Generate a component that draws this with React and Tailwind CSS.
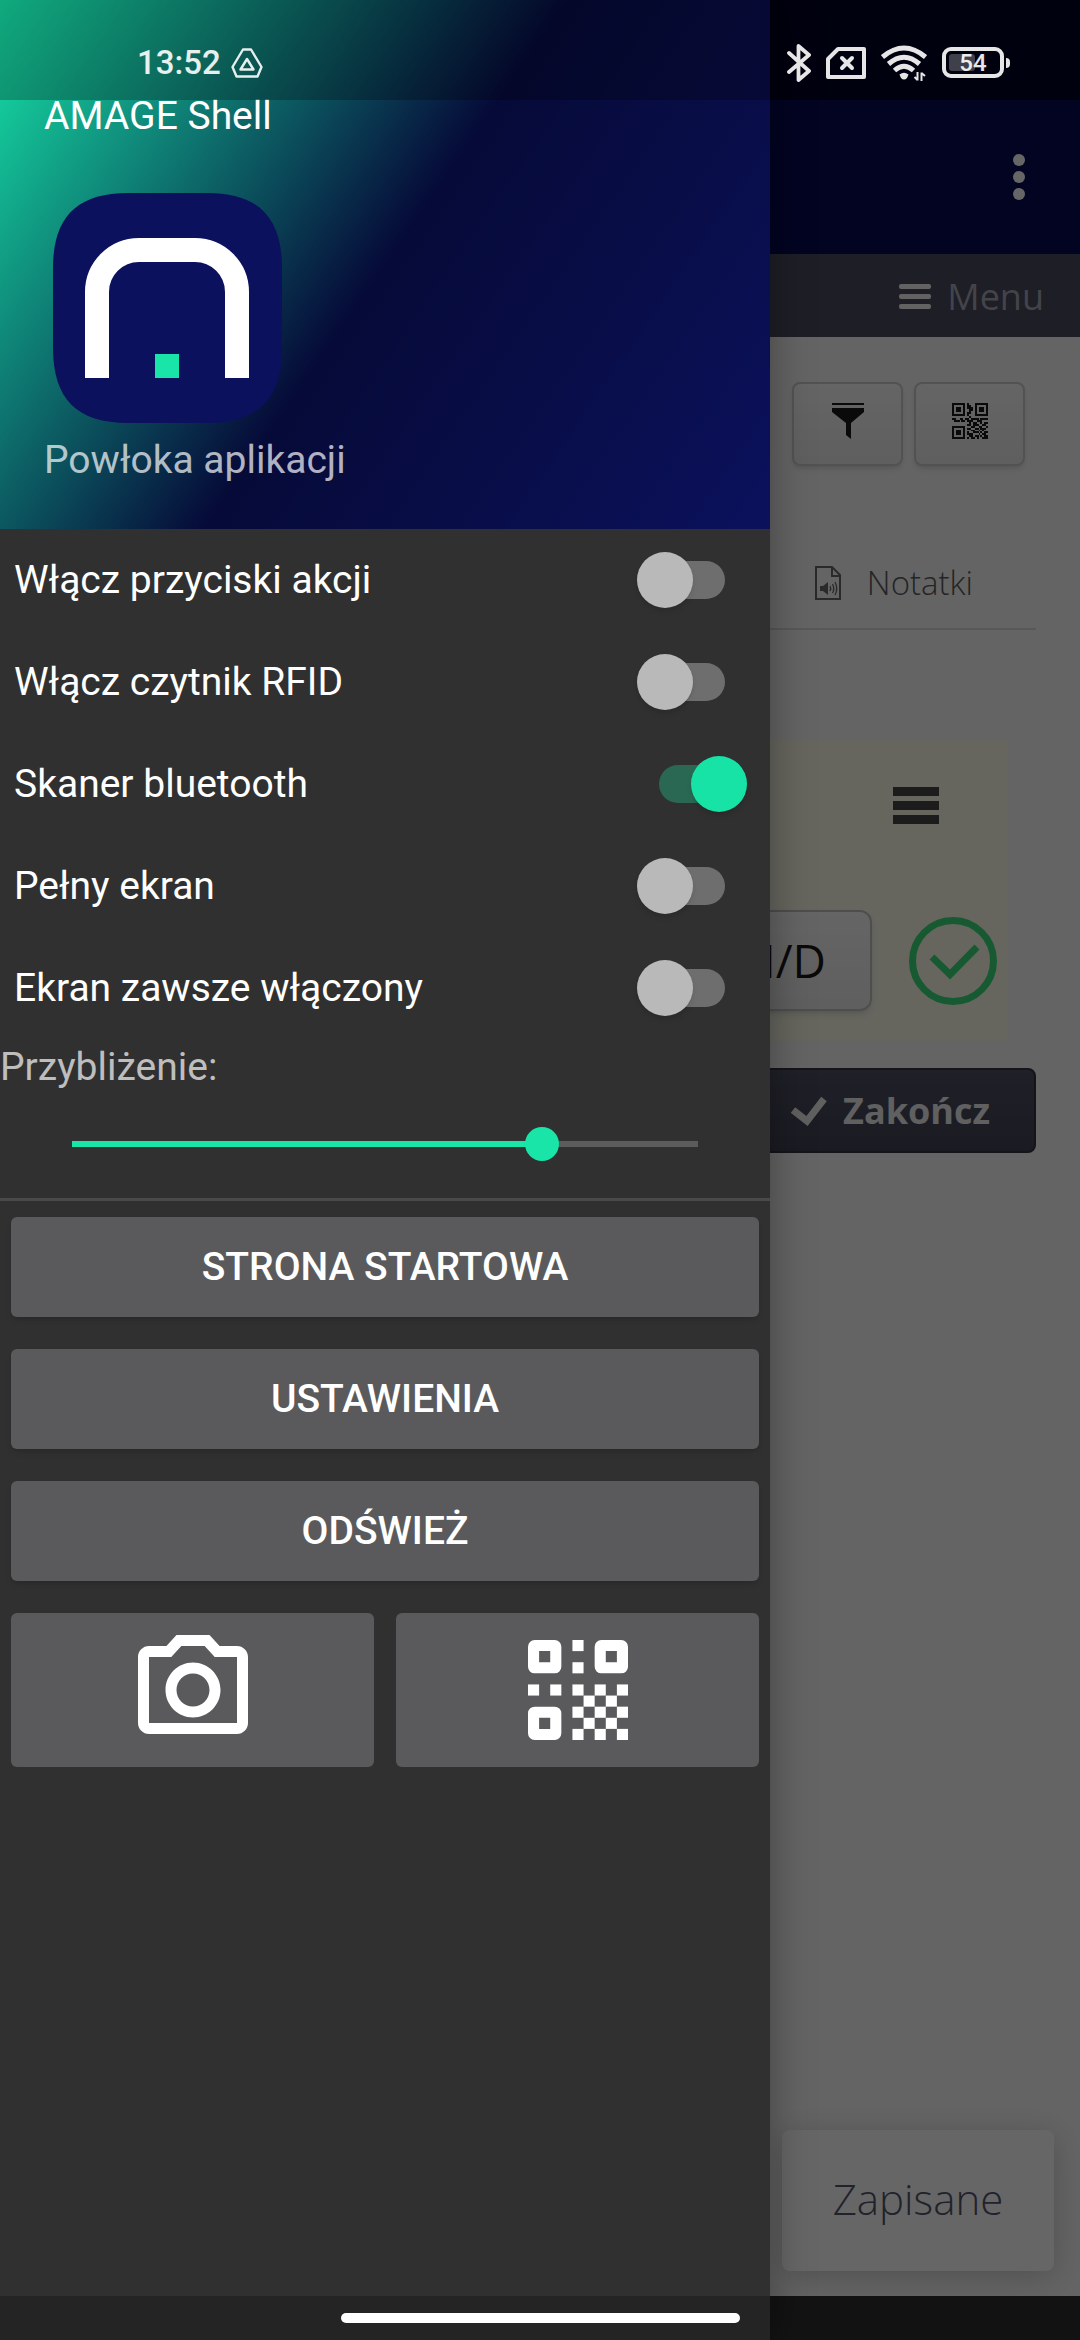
import React, { useState } from 'react';

const settings = [
  { id: 'actions', label: 'Włącz przyciski akcji', on: false },
  { id: 'rfid', label: 'Włącz czytnik RFID', on: false },
  { id: 'bluetooth', label: 'Skaner bluetooth', on: true },
  { id: 'fullscreen', label: 'Pełny ekran', on: false },
  { id: 'awake', label: 'Ekran zawsze włączony', on: false },
];

const qrCells = [
  [4, 0], [4, 2], [0, 4], [2, 4], [4, 4], [6, 4], [8, 4], [5, 5], [7, 5],
  [4, 6], [6, 6], [8, 6], [5, 7], [7, 7], [4, 8], [6, 8], [8, 8],
];

const smallQrRows = [
  '1111111010001111111',
  '1000001011001000001',
  '1011101011101011101',
  '1011101001101011101',
  '1011101001001011101',
  '1000001011001000001',
  '1111111010001111111',
  '0000000001000000000',
  '1100110110111101111',
  '0111011011100111000',
  '0000000001011001011',
  '0000000011011100110',
  '1111111000110011001',
  '1000001011001101110',
  '1011101000110010100',
  '1011101010011101011',
  '1011101011100010110',
  '1000001001101101011',
  '1111111010110100111',
];

const Logo = () => (
  <svg viewBox="0 0 229 230" className="w-[229px] h-[230px]" aria-hidden="true">
    <path
      d="M0 75C0 24 24 0 75 0H154C205 0 229 24 229 75V155C229 206 205 230 154 230H75C24 230 0 206 0 155Z"
      fill="#0b115c"
    />
    <path d="M44 185V99A42 42 0 0 1 86 57H142A42 42 0 0 1 184 99V185" fill="none" stroke="#fff" strokeWidth="24" />
    <rect x="102" y="161" width="24" height="24" fill="#18e5a7" />
  </svg>
);

const CameraIcon = () => (
  <svg viewBox="0 0 24 24" className="w-[132px] h-[132px]" fill="currentColor" aria-hidden="true">
    <path d="M14.12 4l1.83 2H20v12H4V6h4.05l1.83-2h4.24M15 2H9L7.17 4H4c-1.1 0-2 .9-2 2v12c0 1.1.9 2 2 2h16c1.1 0 2-.9 2-2V6c0-1.1-.9-2-2-2h-3.17L15 2zm-3 7c1.65 0 3 1.35 3 3s-1.35 3-3 3-3-1.35-3-3 1.35-3 3-3m0-2c-2.76 0-5 2.24-5 5s2.24 5 5 5 5-2.24 5-5-2.24-5-5-5z" />
  </svg>
);

const QrIcon = () => (
  <svg viewBox="0 0 9 9" className="w-[100px] h-[100px]" fill="currentColor" aria-hidden="true">
    {[[0, 0], [6, 0], [0, 6]].map(([x, y]) => (
      <rect key={`${x}-${y}`} x={x + 0.5} y={y + 0.5} width="2" height="2" rx="0.1" fill="none" stroke="currentColor" strokeWidth="1" strokeLinejoin="round" />
    ))}
    {qrCells.map(([x, y]) => (
      <rect key={`${x}-${y}`} x={x} y={y} width="1" height="1" />
    ))}
  </svg>
);

const SmallQrIcon = () => (
  <svg viewBox="0 0 19 19" className="w-9 h-9" fill="#1a1a1a" shapeRendering="crispEdges" aria-hidden="true">
    {smallQrRows.flatMap((row, y) =>
      [...row].map((c, x) => (c === '1' ? <rect key={`${x}-${y}`} x={x} y={y} width="1" height="1" /> : null))
    )}
  </svg>
);

const FunnelIcon = () => (
  <svg viewBox="0 0 32 36" className="w-8 h-9" fill="#1a1a1a" aria-hidden="true">
    <path d="M0 0H32V2H0ZM0 5H32V9L19 20V36L14 32V20L0 9Z" />
  </svg>
);

const AudioFileIcon = () => (
  <svg viewBox="0 0 26 34" className="w-[26px] h-[34px]" fill="none" stroke="#6a6a6a" strokeWidth="2" aria-hidden="true">
    <path d="M1 1H17L25 9V33H1ZM17 1V10H25" />
    <path d="M5 20H8L13 16V29L8 25H5Z" fill="#6a6a6a" stroke="none" />
    <path d="M15 20Q16.500 22.500 15 25M17.500 18Q20 22.500 17.500 27M20 16Q23.500 22.500 20 29" strokeWidth="1.300" />
  </svg>
);

const StatusBar = () => (
  <div className="absolute inset-x-0 top-0 h-[100px] bg-black/25 text-white/90 flex items-center justify-between pl-[137px] pr-[70px] pt-[26px] pb-[1px]">
    <div className="flex h-full items-center gap-[10px]">
      <span className="text-[33px] leading-[40px] font-medium">13:52</span>
      <svg viewBox="0 0 32 30" className="w-8 h-[30px]" fill="none" stroke="currentColor" strokeWidth="2.400" strokeLinejoin="round" aria-hidden="true">
        <path d="M12 1.500H20L30.500 19L26.500 28.500H5.500L1.500 19Z" />
        <path d="M16 11L22.500 21.500H9.500Z" />
      </svg>
    </div>
    <div className="flex h-full items-center gap-[15px]">
      <svg viewBox="0 0 24 40" className="w-6 h-10" fill="none" stroke="currentColor" strokeWidth="3.800" strokeLinejoin="round" strokeLinecap="round" aria-hidden="true">
        <path d="M2 10L22 28L11.500 37V3L22 12L2 29" />
      </svg>
      <svg viewBox="0 0 40 32" className="w-10 h-8" fill="none" stroke="currentColor" strokeWidth="4" strokeLinejoin="round" aria-hidden="true">
        <path d="M12 2H38V30H2V12Z" />
        <path d="M16 11L26 21M26 11L16 21" strokeLinecap="round" />
      </svg>
      <svg viewBox="0 0 46 36" className="w-[46px] h-9" fill="none" stroke="currentColor" strokeWidth="5" aria-hidden="true">
        <path d="M1.500 12Q23 -6 44.500 12M7.500 19Q23 5.500 38.500 19M13.500 25.500Q23 17 32.500 25.500" />
        <path d="M18.500 29.500Q23 26 27.500 29.500L26 33Q23 36 20 33Z" fill="currentColor" stroke="none" />
        <path d="M36.500 27V35.500M33.500 32L36.500 35M40.500 36V27.500M40.500 28L44 31" strokeWidth="2" />
      </svg>
      <div className="flex items-center gap-[2px]">
        <div className="relative w-[62px] h-[31px] rounded-[9px] border-4 border-current">
          <span className="absolute left-[3px] top-[3px] w-[26px] h-[17px] rounded-[3px] bg-white/25"></span>
          <span className="relative block text-center text-[24px] leading-[25px] font-medium">54</span>
        </div>
        <span className="w-1 h-[10px] rounded-r bg-current"></span>
      </div>
    </div>
  </div>
);

const Page = () => (
  <main className="min-h-screen bg-[#fafafa] font-['Open_Sans',sans-serif]">
    <header className="flex h-[254px] items-center justify-end bg-[linear-gradient(#040632_100px,#070b55_100px)] pt-[100px] pr-[55px]">
      <button type="button" aria-label="Więcej" className="flex flex-col gap-[5px]">
        <span className="w-3 h-3 rounded-full bg-white"></span>
        <span className="w-3 h-3 rounded-full bg-white"></span>
        <span className="w-3 h-3 rounded-full bg-white"></span>
      </button>
    </header>
    <nav className="flex h-[83px] items-center justify-end bg-[#4b4b5f] pt-[2px] pr-9">
      <button type="button" className="flex items-center gap-4 text-[36px] leading-[48px] text-[#a9a9b6]">
        <span className="flex flex-col gap-[5px]">
          <span className="w-8 h-[5px] rounded-xs bg-[#f4f4f4]"></span>
          <span className="w-8 h-[5px] rounded-xs bg-[#f4f4f4]"></span>
          <span className="w-8 h-[5px] rounded-xs bg-[#f4f4f4]"></span>
        </span>
        Menu
      </button>
    </nav>
    <section className="flex flex-col items-end">
      <div className="mt-[45px] mr-[55px] flex gap-[11px]">
        <button type="button" aria-label="Filtr" className="flex w-[111px] h-[84px] items-start justify-center rounded-lg border-2 border-[#cccccc] bg-linear-to-b from-[#fcfcfc] to-[#ededed] pt-[19px] shadow-md">
          <FunnelIcon />
        </button>
        <button type="button" aria-label="Kod QR" className="flex w-[111px] h-[84px] items-start justify-center rounded-lg border-2 border-[#cccccc] bg-linear-to-b from-[#fcfcfc] to-[#ededed] pt-[19px] shadow-md">
          <SmallQrIcon />
        </button>
      </div>
      <div className="mt-[68px] flex self-stretch mr-11 h-24 items-center justify-end gap-[26px] border-b-2 border-[#dddddd] pt-1 pr-[63px]">
        <AudioFileIcon />
        <a href="#notatki" className="text-[33px] leading-[48px] font-light text-[#5c5c5c]">Notatki</a>
      </div>
      <div className="mt-[110px] mr-[72px] self-stretch h-[301px] bg-[#fefeee] pt-[47px] pr-[11px] flex flex-col items-end">
        <button type="button" aria-label="Menu zadania" className="mr-[58px] flex flex-col gap-[5px]">
          <span className="w-[46px] h-[9px] bg-[#484848]"></span>
          <span className="w-[46px] h-[9px] bg-[#484848]"></span>
          <span className="w-[46px] h-[9px] bg-[#484848]"></span>
        </button>
        <div className="mt-[86px] flex items-center gap-[37px]">
          <button type="button" className="h-[101px] rounded-xl border-2 border-[#c4c4c4] bg-linear-to-b from-[#fcfcfc] to-[#ededed] px-11 text-[46px] text-[#1a1a1a] shadow-md">N/D</button>
          <svg viewBox="0 0 88 88" className="w-[88px] h-[88px]" fill="none" stroke="#3adf7c" strokeWidth="7" aria-hidden="true">
            <circle cx="44" cy="44" r="40.500" />
            <path d="M23 40L41 57.500L68 30" />
          </svg>
        </div>
      </div>
      <button type="button" className="mt-[27px] mr-11 flex h-[85px] items-center justify-end gap-4 self-stretch rounded-lg border-2 border-[#33333f] bg-linear-to-b from-[#505064] to-[#434356] pr-11 text-[36px] font-bold text-[#f0f0f0]">
        <svg viewBox="0 0 36 30" className="w-9 h-[30px]" fill="none" stroke="currentColor" strokeWidth="7" aria-hidden="true">
          <path d="M2 14L16 25L33 3" />
        </svg>
        Zakończ
      </button>
    </section>
    <div className="absolute right-[26px] bottom-[69px] flex w-[272px] h-[141px] items-center justify-center rounded-lg bg-white pb-1 text-[42px] font-light text-[#55556e] shadow-[0_6px_32px_rgba(0,0,0,0.2)]">
      Zapisane
    </div>
  </main>
);

const Switch = ({ id, label, on }) => {
  const [checked, setChecked] = useState(on);
  return (
    <div className="flex h-[102px] items-center justify-between pl-[14px] pr-[45px]">
      <label htmlFor={id} className="text-[39px] leading-[46px] text-white">{label}</label>
      <input
        id={id}
        type="checkbox"
        role="switch"
        checked={checked}
        onChange={(e) => setChecked(e.target.checked)}
        className="relative w-[66px] h-[38px] appearance-none rounded-full bg-[#6e6e6e] checked:bg-[#2a6854] before:absolute before:-top-[9px] before:-left-[22px] before:w-14 before:h-14 before:rounded-full before:bg-[#b9b9b9] before:shadow-md before:content-[''] checked:before:left-8 checked:before:bg-[#18e3a6]"
      />
    </div>
  );
};

const Drawer = () => {
  const [zoom, setZoom] = useState(153);
  const fill = `${zoom / 2}%`;
  return (
    <aside className="absolute inset-y-0 left-0 w-[770px] max-w-full bg-[#303030] shadow-[0_0_40px_rgba(0,0,0,0.35)]">
      <div className="h-[529px] bg-[linear-gradient(124.5deg,#16e3a8_0%,#060a38_50%,#0b115c_100%)] pt-[93px] pl-11">
        <h1 className="text-[39px] leading-[46px] text-white">AMAGE Shell</h1>
        <div className="mt-[54px] ml-[9px]">
          <Logo />
        </div>
        <p className="mt-[14px] text-[39px] leading-[46px] text-white/70">Powłoka aplikacji</p>
      </div>
      {settings.map((s) => (
        <Switch key={s.id} {...s} />
      ))}
      <label htmlFor="zoom" className="mt-[5px] block text-[39px] leading-[46px] text-white/70">Przybliżenie:</label>
      <div className="flex h-[111px] items-center border-b-[3px] border-[#4a4a4a] px-[72px]">
        <input
          id="zoom"
          type="range"
          min="0"
          max="200"
          value={zoom}
          onChange={(e) => setZoom(Number(e.target.value))}
          style={{ backgroundImage: `linear-gradient(to right, #18e5a7 ${fill}, #5c5c5c ${fill})` }}
          className="w-full h-[6px] appearance-none [&::-webkit-slider-thumb]:appearance-none [&::-webkit-slider-thumb]:w-[34px] [&::-webkit-slider-thumb]:h-[34px] [&::-webkit-slider-thumb]:rounded-full [&::-webkit-slider-thumb]:bg-[#18e5a7]"
        />
      </div>
      <div className="grid grid-cols-2 gap-x-[22px] gap-y-8 px-[11px] pt-4 text-[39px] font-medium text-white">
        <button type="button" className="col-span-2 h-[100px] rounded-md bg-[#5a5a5c] shadow-md">STRONA STARTOWA</button>
        <button type="button" className="col-span-2 h-[100px] rounded-md bg-[#5a5a5c] shadow-md">USTAWIENIA</button>
        <button type="button" className="col-span-2 h-[100px] rounded-md bg-[#5a5a5c] shadow-md">ODŚWIEŻ</button>
        <button type="button" aria-label="Aparat" className="flex h-[154px] items-center justify-center rounded-md bg-[#5a5a5c]">
          <CameraIcon />
        </button>
        <button type="button" aria-label="Skanuj kod QR" className="flex h-[154px] items-center justify-center rounded-md bg-[#5a5a5c]">
          <QrIcon />
        </button>
      </div>
    </aside>
  );
};

const App = () => (
  <div className="relative min-h-screen overflow-hidden font-[Roboto,sans-serif]">
    <Page />
    <div className="absolute inset-x-0 bottom-0 h-11 bg-[#3f3f3f]"></div>
    <div className="absolute inset-0 bg-black/60"></div>
    <Drawer />
    <StatusBar />
    <div className="absolute inset-x-0 bottom-0 flex h-11 items-center justify-center bg-black/25">
      <span className="w-[399px] h-[10px] rounded-full bg-white"></span>
    </div>
  </div>
);

export default App;
